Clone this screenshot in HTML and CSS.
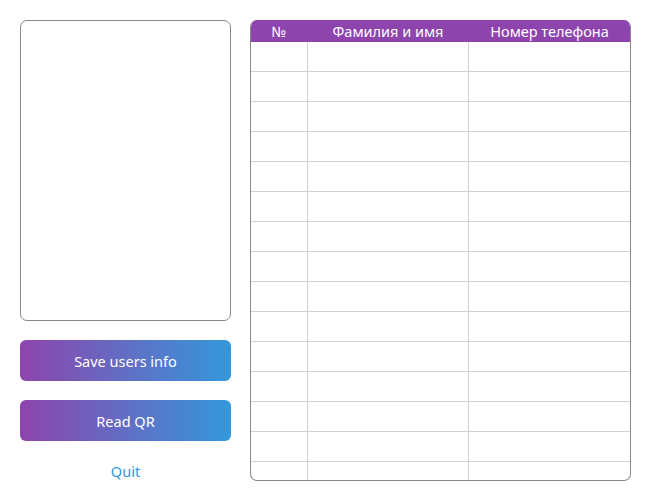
FILE: index.html
```html
<!DOCTYPE html>
<html>
<head>
<meta charset="utf-8">
<link rel="stylesheet" href="styles.css">
</head>
<body>
<div class="app">
  <div class="left">
    <div class="preview"></div>
    <button class="btn">Save users info</button>
    <button class="btn">Read QR</button>
    <a class="quit">Quit</a>
  </div>
  <div class="table">
    <div class="head">
      <div class="c1">№</div>
      <div class="c2">Фамилия и имя</div>
      <div class="c3">Номер телефона</div>
    </div>
    <div class="body">
      <div class="row"><div class="c1"></div><div class="c2"></div><div class="c3"></div></div>
      <div class="row"><div class="c1"></div><div class="c2"></div><div class="c3"></div></div>
      <div class="row"><div class="c1"></div><div class="c2"></div><div class="c3"></div></div>
      <div class="row"><div class="c1"></div><div class="c2"></div><div class="c3"></div></div>
      <div class="row"><div class="c1"></div><div class="c2"></div><div class="c3"></div></div>
      <div class="row"><div class="c1"></div><div class="c2"></div><div class="c3"></div></div>
      <div class="row"><div class="c1"></div><div class="c2"></div><div class="c3"></div></div>
      <div class="row"><div class="c1"></div><div class="c2"></div><div class="c3"></div></div>
      <div class="row"><div class="c1"></div><div class="c2"></div><div class="c3"></div></div>
      <div class="row"><div class="c1"></div><div class="c2"></div><div class="c3"></div></div>
      <div class="row"><div class="c1"></div><div class="c2"></div><div class="c3"></div></div>
      <div class="row"><div class="c1"></div><div class="c2"></div><div class="c3"></div></div>
      <div class="row"><div class="c1"></div><div class="c2"></div><div class="c3"></div></div>
      <div class="row"><div class="c1"></div><div class="c2"></div><div class="c3"></div></div>
      <div class="row"><div class="c1"></div><div class="c2"></div><div class="c3"></div></div>
    </div>
  </div>
</div>
</body>
</html>
```
FILE: styles.css
```css
html, body {
  margin: 0;
  padding: 0;
  background: #ffffff;
}
body {
  font-family: "Noto Sans", "Open Sans", sans-serif;
  font-size: 14.5px;
}
.app {
  display: flex;
  padding: 20px;
  gap: 19px;
}
.left {
  width: 211px;
  display: flex;
  flex-direction: column;
}
.preview {
  height: 299px;
  border: 1px solid #888;
  border-radius: 7px;
}
.btn {
  height: 41px;
  border: none;
  border-radius: 6px;
  background: linear-gradient(to right, #8e44ad, #3498db);
  color: #fff;
  font-family: inherit;
  font-size: 14.5px;
  padding: 0;
  margin-top: 19px;
}
.quit {
  margin-top: 19px;
  text-align: center;
  color: #3498db;
  line-height: 22px;
}
.table {
  width: 379px;
  height: 460px;
  border: 1px solid #888;
  border-top: none;
  border-radius: 7px;
  overflow: hidden;
  display: flex;
  flex-direction: column;
}
.head {
  display: flex;
  height: 22px;
  background: #8e44ad;
  color: #fff;
  line-height: 22px;
  text-align: center;
}
.c1 { width: 56px; }
.c2 { width: 160px; border-left: 1px solid #d2d2d2; }
.c3 { flex: 1; border-left: 1px solid #d2d2d2; }
.head .c2, .head .c3 { border-left-color: transparent; }
.body {
  flex: 1;
  overflow: hidden;
}
.row {
  display: flex;
  height: 29px;
  border-bottom: 1px solid #d2d2d2;
}
```
